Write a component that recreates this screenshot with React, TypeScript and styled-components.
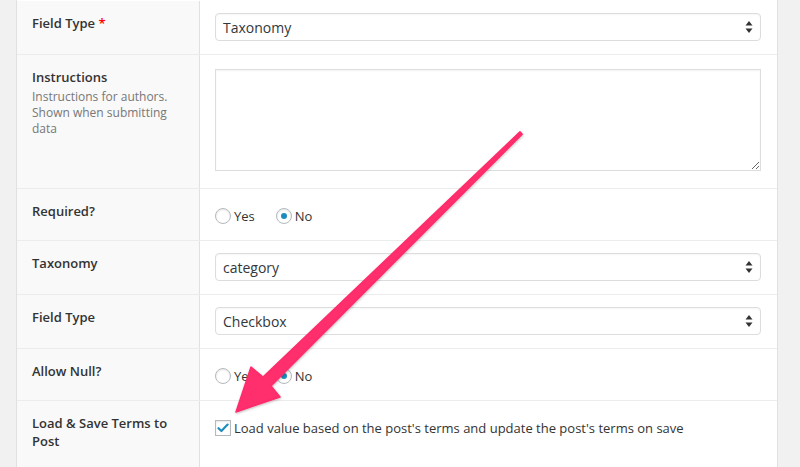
import React from "react";
import styled, { createGlobalStyle } from "styled-components";

const Global = createGlobalStyle`
  html, body { margin: 0; padding: 0; background: #f1f1f1; }
  body { font-family: "Open Sans", "Liberation Sans", sans-serif; color: #333; }
  * { box-sizing: border-box; }
`;

const Page = styled.div`
  position: relative;
  width: 800px;
  height: 467px;
  overflow: hidden;
  background: #f1f1f1;
  padding-left: 16px;
`;

const Table = styled.div`
  width: 762px;
  background: #fff;
  border-left: 1px solid #e1e1e1;
  border-right: 1px solid #e1e1e1;
`;

const Row = styled.div<{ $first?: boolean; $tall?: boolean }>`
  display: flex;
  min-height: ${(p) => (p.$tall ? "90px" : "0")};
  border-top: 1px solid ${(p) => (p.$first ? "transparent" : "#ececec")};
`;

const LabelCell = styled.div`
  flex: 0 0 183px;
  background: #f9f9f9;
  border-right: 1px solid #e1e1e1;
  padding: 13px 15px 12px 15px;
`;

const Label = styled.div`
  font-size: 13px;
  font-weight: 600;
  line-height: 18px;
  color: #333;
`;

const Req = styled.span`
  color: #f00;
`;

const Desc = styled.div`
  margin-top: 3px;
  font-size: 12px;
  line-height: 16px;
  color: #777;
`;

const FieldCell = styled.div`
  flex: 1;
  padding: 12px 16px 13px 15px;
`;

const SelectWrap = styled.div`
  position: relative;
  height: 28px;
  border: 1px solid #ddd;
  border-radius: 4px;
  background: #fff;
  box-shadow: inset 0 1px 2px rgba(0, 0, 0, 0.04);
  display: flex;
  align-items: center;
  padding-left: 7px;
  font-size: 14px;
  color: #32373c;
`;

const ArrowIcon = styled.svg`
  position: absolute;
  right: 7px;
  top: 6px;
`;

const TextArea = styled.textarea`
  display: block;
  width: 100%;
  height: 102px;
  margin: 2px 0 4px;
  border: 1px solid #ddd;
  border-radius: 0;
  box-shadow: inset 0 1px 2px rgba(0, 0, 0, 0.05);
  resize: vertical;
  font-family: inherit;
  outline: none;
`;

const ChoiceList = styled.div`
  display: flex;
  align-items: center;
  height: 26px;
  padding-top: 3px;
  gap: 21px;
`;

const Choice = styled.label`
  display: flex;
  align-items: center;
  gap: 3px;
  font-size: 13px;
  line-height: 24px;
  color: #333;
`;

const Radio = styled.span<{ $on?: boolean }>`
  width: 16px;
  height: 16px;
  border-radius: 50%;
  border: 1px solid #b4b9be;
  background: #fff;
  box-shadow: inset 0 1px 2px rgba(0, 0, 0, 0.1);
  display: flex;
  align-items: center;
  justify-content: center;
  &::after {
    content: "";
    display: ${(p) => (p.$on ? "block" : "none")};
    width: 6px;
    height: 6px;
    border-radius: 50%;
    background: #1e8cbe;
  }
`;

const Check = styled.span`
  width: 16px;
  height: 16px;
  border: 1px solid #b4b9be;
  background: #fff;
  box-shadow: inset 0 1px 2px rgba(0, 0, 0, 0.1);
  display: flex;
  align-items: center;
  justify-content: center;
`;

const Overlay = styled.svg`
  position: absolute;
  left: 0;
  top: 0;
  pointer-events: none;
`;

const Select = ({ value }: { value: string }) => (
  <SelectWrap>
    {value}
    <ArrowIcon width="8" height="14" viewBox="0 0 8 14">
      <path d="M4 1 L7.5 5.5 L0.5 5.5 Z" fill="#333" />
      <path d="M0.5 8.5 L7.5 8.5 L4 13 Z" fill="#333" />
    </ArrowIcon>
  </SelectWrap>
);

const YesNo = () => (
  <ChoiceList>
    <Choice>
      <Radio />
      Yes
    </Choice>
    <Choice>
      <Radio $on />
      No
    </Choice>
  </ChoiceList>
);

export default function App() {
  return (
    <>
      <Global />
      <Page>
        <Table>
          <Row $first>
            <LabelCell>
              <Label>
                Field Type <Req>*</Req>
              </Label>
            </LabelCell>
            <FieldCell>
              <Select value="Taxonomy" />
            </FieldCell>
          </Row>
          <Row>
            <LabelCell>
              <Label>Instructions</Label>
              <Desc>Instructions for authors. Shown when submitting data</Desc>
            </LabelCell>
            <FieldCell>
              <TextArea />
            </FieldCell>
          </Row>
          <Row>
            <LabelCell>
              <Label>Required?</Label>
            </LabelCell>
            <FieldCell>
              <YesNo />
            </FieldCell>
          </Row>
          <Row>
            <LabelCell>
              <Label>Taxonomy</Label>
            </LabelCell>
            <FieldCell>
              <Select value="category" />
            </FieldCell>
          </Row>
          <Row>
            <LabelCell>
              <Label>Field Type</Label>
            </LabelCell>
            <FieldCell>
              <Select value="Checkbox" />
            </FieldCell>
          </Row>
          <Row>
            <LabelCell>
              <Label>Allow Null?</Label>
            </LabelCell>
            <FieldCell>
              <YesNo />
            </FieldCell>
          </Row>
          <Row $tall>
            <LabelCell>
              <Label>Load &amp; Save Terms to Post</Label>
            </LabelCell>
            <FieldCell>
              <ChoiceList>
                <Choice>
                  <Check>
                    <svg width="12" height="10" viewBox="0 0 12 10">
                      <path
                        d="M1.5 5.2 L4.4 8 L10.6 1.6"
                        fill="none"
                        stroke="#1e8cbe"
                        strokeWidth="2.2"
                        strokeLinecap="round"
                        strokeLinejoin="round"
                      />
                    </svg>
                  </Check>
                  Load value based on the post's terms and update the post's terms on save
                </Choice>
              </ChoiceList>
            </FieldCell>
          </Row>
        </Table>
        <Overlay width="800" height="467" viewBox="0 0 800 467">
          <defs>
            <filter id="sh" x="-10%" y="-10%" width="120%" height="120%">
              <feDropShadow dx="0.5" dy="1" stdDeviation="0.8" floodColor="#000" floodOpacity="0.25" />
            </filter>
          </defs>
          <polygon
            filter="url(#sh)"
            points="236,412 251,367 263,377 520,131.8 522.2,134.2 271,386 280,397"
            fill="#ff2d6c"
            stroke="#ff2d6c"
            strokeWidth="1.5"
            strokeLinejoin="round"
          />
        </Overlay>
      </Page>
    </>
  );
}
